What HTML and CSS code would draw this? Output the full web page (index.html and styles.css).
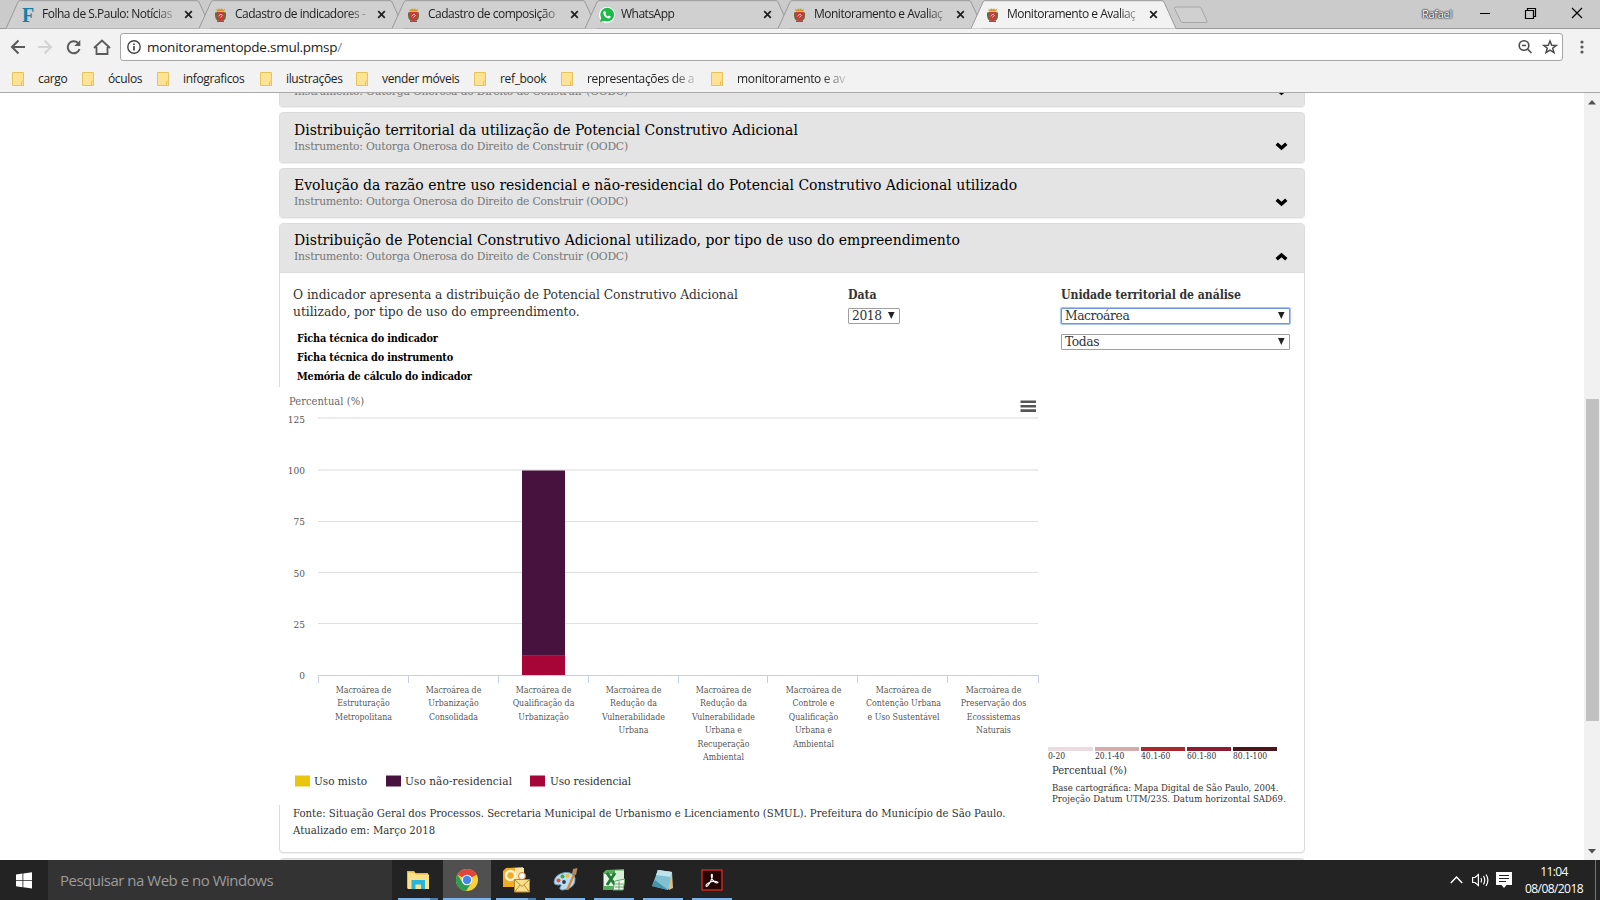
FILE: index.html
```
<!DOCTYPE html>
<html lang="pt-BR">
<head>
<meta charset="utf-8">
<title>Monitoramento e Avaliação</title>
<link rel="stylesheet" href="styles.css">
</head>
<body>
<svg width="0" height="0" class="defs">
  <defs>
    <g id="tab-shape"><path d="M0 28.5 L12 2 Q12.600 .7 14 .7 H191 Q192.500 .7 193 2 L205 28.500" stroke="#999"/></g>
    <g id="crest">
      <path d="M1.500 .5 L3 2 L4 .3 L5.500 1.500 L7 .3 L8 2 L9.700 .5 L9.500 3.500 H1.800z" fill="#cf9a2b"/>
      <path d="M0 5 Q-.3 11.500 2.500 12.500 L8.500 12.500 Q11.500 11.500 11 5 Q10 3.500 9 4.500 H2 Q1 3.500 0 5z" fill="#6b6a3c"/>
      <path d="M2 4 H9 V9 Q8.500 11 5.500 12 Q2.500 11 2 9z" fill="#cb3b3a"/>
      <path d="M3.700 8.300 L5.800 6 L7.300 7.500 L5.500 9.500" stroke="#f3c9c2" fill="none"/>
      <path d="M2 12.500 Q5.500 11.500 9 12.500 V14 H2z" fill="#b8433a"/>
    </g>
    <path id="cross" d="M1.200 1.200 L7.800 7.800 M7.800 1.200 L1.200 7.800" stroke="#222" stroke-width="1.8" fill="none"/>
    <g id="folder"><path d="M.5 .5 H11.500 V13.500 H.5z" fill="#ffe394" stroke="#e8c35c"/><path d="M9.500 13.500 V10 Q9.500 9.300 10.500 9.300 H11.500 V13.500z" fill="#ffe394" stroke="#e8c35c"/></g>
    <path id="chevron" d="M1.700 2.800 L6.500 7 L11.300 2.800" fill="none" stroke="#000" stroke-width="3.500"/>
    <path id="caret" d="M0 0 H6.600 L3.300 7z" fill="#222"/>
  </defs>
</svg>

<header class="browser">
  <div class="tabs">
    <div class="tab"><svg class="tab-bg" width="205" height="29" fill="#d0d0d0"><use href="#tab-shape"/></svg>
      <b class="fav fav-f">F</b><span class="tab-title">Folha de S.Paulo: Notícias</span><svg class="close" width="9" height="9"><use href="#cross"/></svg></div>
    <div class="tab"><svg class="tab-bg" width="205" height="29" fill="#d0d0d0"><use href="#tab-shape"/></svg>
      <svg class="fav" width="12" height="14"><use href="#crest"/></svg><span class="tab-title">Cadastro de indicadores -</span><svg class="close" width="9" height="9"><use href="#cross"/></svg></div>
    <div class="tab"><svg class="tab-bg" width="205" height="29" fill="#d0d0d0"><use href="#tab-shape"/></svg>
      <svg class="fav" width="12" height="14"><use href="#crest"/></svg><span class="tab-title">Cadastro de composição</span><svg class="close" width="9" height="9"><use href="#cross"/></svg></div>
    <div class="tab"><svg class="tab-bg" width="205" height="29" fill="#d0d0d0"><use href="#tab-shape"/></svg>
      <svg class="fav wa" width="16" height="16"><circle cx="8" cy="8" r="8" fill="#fff"/><circle cx="8.200" cy="7.700" r="6.900" fill="#1fb84b"/><path d="M1 15 L2.300 10.500 L5.500 13.700z" fill="#1fb84b"/><path d="M5 4.300 L6.200 4.200 L7 6 L6.300 7 Q7.200 8.800 9 9.500 L9.900 8.600 L11.800 9.600 Q11.600 11.500 9.800 11.500 Q5 10.800 4.300 6 Q4.300 5 5 4.300z" fill="#fff"/></svg><span class="tab-title">WhatsApp</span><svg class="close" width="9" height="9"><use href="#cross"/></svg></div>
    <div class="tab"><svg class="tab-bg" width="205" height="29" fill="#d0d0d0"><use href="#tab-shape"/></svg>
      <svg class="fav" width="12" height="14"><use href="#crest"/></svg><span class="tab-title">Monitoramento e Avaliaç</span><svg class="close" width="9" height="9"><use href="#cross"/></svg></div>
    <div class="tab active"><svg class="tab-bg" width="205" height="29" fill="#f2f2f2"><use href="#tab-shape"/></svg>
      <svg class="fav" width="12" height="14"><use href="#crest"/></svg><span class="tab-title">Monitoramento e Avaliaç</span><svg class="close" width="9" height="9"><use href="#cross"/></svg></div>
    <svg class="new-tab" width="36" height="18"><path d="M3 1 H26 Q27.500 1 28 2 L34 15 Q34.500 16.500 33 16.500 H10 Q8.500 16.500 8 15.500 L1.500 2.500 Q1 1 3 1z" fill="#d0d0d0" stroke="#a6a6a6"/></svg>
    <div class="win">
      <span class="user">Rafael</span>
      <svg width="110" height="12" fill="none" stroke="#000"><path d="M1 6.500 H11"/><path d="M46.500 3.500 H54.500 V11.500 H46.500z M48.500 3.500 V1.500 H56.500 V9.500 H54.500" stroke-width="1.200"/><path d="M93 1 L103 11 M103 1 L93 11" stroke-width="1.200"/></svg>
    </div>
  </div>
  <div class="toolbar">
    <svg width="100" height="18" class="nav" fill="none" stroke="#5a5a5a" stroke-width="2">
      <path d="M15 9 H2.500 M8.500 2.500 L2 9 L8.500 15.500"/>
      <path d="M28 9 H40.500 M34.500 2.500 L41 9 L34.500 15.500" stroke="#d3d3d3"/>
      <path d="M68 5 A6 6 0 1 0 69.500 11"/><path d="M70.300 2 V8 H64.300z" fill="#5a5a5a" stroke="none"/>
      <path d="M84 10 L92 2.500 L100 10 M86.500 9 V16 H97.500 V9" stroke-width="1.800"/>
    </svg>
    <div class="omnibox">
      <svg width="14" height="14" fill="none" stroke="#444" stroke-width="1.400"><circle cx="7" cy="7" r="6.200"/><path d="M7 6 V10.500 M7 3.500 V5" stroke-width="1.700"/></svg>
      <span class="url">monitoramentopde.smul.pmsp<i>/</i></span>
      <svg class="omni-end" width="40" height="16" fill="none" stroke="#4a4a4a" stroke-width="1.600"><circle cx="6" cy="6.500" r="4.800"/><path d="M9.500 10 L13.500 14 M4 6.500 H8"/><path d="M32 2 L33.700 6.200 L38.200 6.400 L34.700 9.200 L36 13.600 L32 11.100 L28 13.600 L29.300 9.200 L25.800 6.400 L30.300 6.200z" stroke-width="1.500"/></svg>
    </div>
    <svg class="dots" width="4" height="14" fill="#5a5a5a"><circle cx="2" cy="2" r="1.600"/><circle cx="2" cy="7" r="1.600"/><circle cx="2" cy="12" r="1.600"/></svg>
  </div>
  <nav class="bookmarks">
    <svg width="12" height="14"><use href="#folder"/></svg><span style="width:30px">cargo</span>
    <svg width="12" height="14"><use href="#folder"/></svg><span style="width:35px">óculos</span>
    <svg width="12" height="14"><use href="#folder"/></svg><span style="width:63px">infograficos</span>
    <svg width="12" height="14"><use href="#folder"/></svg><span style="width:56px">ilustrações</span>
    <svg width="12" height="14"><use href="#folder"/></svg><span style="width:78px">vender móveis</span>
    <svg width="12" height="14"><use href="#folder"/></svg><span style="width:47px">ref_book</span>
    <svg width="12" height="14"><use href="#folder"/></svg><span class="fade" style="width:110px">representações de a</span>
    <svg width="12" height="14"><use href="#folder"/></svg><span class="fade" style="width:110px">monitoramento e av</span>
  </nav>
</header>

<div class="viewport">
  <main>
    <section class="card"><div class="head"><h2>&nbsp;</h2><p>Instrumento: Outorga Onerosa do Direito de Construir (OODC)</p><svg class="chev" width="13" height="10"><use href="#chevron"/></svg></div></section>
    <section class="card"><div class="head"><h2>Distribuição territorial da utilização de Potencial Construtivo Adicional</h2><p>Instrumento: Outorga Onerosa do Direito de Construir (OODC)</p><svg class="chev" width="13" height="10"><use href="#chevron"/></svg></div></section>
    <section class="card"><div class="head"><h2>Evolução da razão entre uso residencial e não-residencial do Potencial Construtivo Adicional utilizado</h2><p>Instrumento: Outorga Onerosa do Direito de Construir (OODC)</p><svg class="chev" width="13" height="10"><use href="#chevron"/></svg></div></section>
    <section class="card open">
      <div class="head"><h2>Distribuição de Potencial Construtivo Adicional utilizado, por tipo de uso do empreendimento</h2><p>Instrumento: Outorga Onerosa do Direito de Construir (OODC)</p><svg class="chev up" width="13" height="10"><use href="#chevron"/></svg></div>
      <div class="intro">
        <div class="about">
          <p>O indicador apresenta a distribuição de Potencial Construtivo Adicional<br>utilizado, por tipo de uso do empreendimento.</p>
          <ul><li>Ficha técnica do indicador</li><li>Ficha técnica do instrumento</li><li>Memória de cálculo do indicador</li></ul>
        </div>
        <div class="field date"><label>Data</label><div class="select">2018<svg width="7" height="8"><use href="#caret"/></svg></div></div>
        <div class="field unit"><label>Unidade territorial de análise</label>
          <div class="select focus">Macroárea<svg width="7" height="8"><use href="#caret"/></svg></div>
          <div class="select">Todas<svg width="7" height="8"><use href="#caret"/></svg></div></div>
      </div>
      <div class="results">
        <svg class="chart" width="766" height="418" viewBox="279 387 766 418">
          <text x="289" y="405" class="axis-title" textLength="75">Percentual (%)</text>
          <g fill="#555"><path d="M1020.500 400.500h15.500v2.600h-15.500zM1020.500 404.900h15.500v2.600h-15.500zM1020.500 409.300h15.500v2.600h-15.500z"/></g>
          <g stroke="#e0e0e0"><path d="M318 418H1038M318 470H1038" stroke-width="1.600" stroke="#e6e6e6"/><path d="M318 521.500H1038M318 572.500H1038M318 623.500H1038"/></g>
          <g class="y-labels"><text x="305" y="423">125</text><text x="305" y="474">100</text><text x="305" y="525">75</text><text x="305" y="577">50</text><text x="305" y="628">25</text><text x="305" y="679">0</text></g>
          <path d="M522 470.500H565V655.500H522z" fill="#48123f"/>
          <path d="M522 655.500H565V675H522z" fill="#a70437"/>
          <path d="M522 655.500H565" stroke="#8c2a55"/>
          <path d="M318 675.500H1038.500M318.500 675V683M408.500 675V683M498.500 675V683M588.500 675V683M678.500 675V683M767.500 675V683M857.500 675V683M947.500 675V683M1038.500 675V683" stroke="#c5d0e0" fill="none"/>
          <g class="x-labels">
            <text y="693"><tspan x="363.500">Macroárea de</tspan><tspan x="363.500" dy="13.400">Estruturação</tspan><tspan x="363.500" dy="13.400">Metropolitana</tspan></text>
            <text y="693"><tspan x="453.500">Macroárea de</tspan><tspan x="453.500" dy="13.400">Urbanização</tspan><tspan x="453.500" dy="13.400">Consolidada</tspan></text>
            <text y="693"><tspan x="543.500">Macroárea de</tspan><tspan x="543.500" dy="13.400">Qualificação da</tspan><tspan x="543.500" dy="13.400">Urbanização</tspan></text>
            <text y="693"><tspan x="633.500">Macroárea de</tspan><tspan x="633.500" dy="13.400">Redução da</tspan><tspan x="633.500" dy="13.400">Vulnerabilidade</tspan><tspan x="633.500" dy="13.400">Urbana</tspan></text>
            <text y="693"><tspan x="723.500">Macroárea de</tspan><tspan x="723.500" dy="13.400">Redução da</tspan><tspan x="723.500" dy="13.400">Vulnerabilidade</tspan><tspan x="723.500" dy="13.400">Urbana e</tspan><tspan x="723.500" dy="13.400">Recuperação</tspan><tspan x="723.500" dy="13.400">Ambiental</tspan></text>
            <text y="693"><tspan x="813.500">Macroárea de</tspan><tspan x="813.500" dy="13.400">Controle e</tspan><tspan x="813.500" dy="13.400">Qualificação</tspan><tspan x="813.500" dy="13.400">Urbana e</tspan><tspan x="813.500" dy="13.400">Ambiental</tspan></text>
            <text y="693"><tspan x="903.500">Macroárea de</tspan><tspan x="903.500" dy="13.400">Contenção Urbana</tspan><tspan x="903.500" dy="13.400">e Uso Sustentável</tspan></text>
            <text y="693"><tspan x="993.500">Macroárea de</tspan><tspan x="993.500" dy="13.400">Preservação dos</tspan><tspan x="993.500" dy="13.400">Ecossistemas</tspan><tspan x="993.500" dy="13.400">Naturais</tspan></text>
          </g>
          <path d="M295 775.500h15v11h-15z" fill="#e9c60d"/><path d="M386 775.500h15v11h-15z" fill="#48123f"/><path d="M530 775.500h15v11h-15z" fill="#a70437"/>
          <g class="legend"><text x="314" y="785" textLength="53">Uso misto</text><text x="405" y="785" textLength="107">Uso não-residencial</text><text x="550" y="785" textLength="81">Uso residencial</text></g>
        </svg>
        <aside class="map-legend">
          <div class="scale">
            <div><i class="c1"></i>0-20</div><div><i class="c2"></i>20.1-40</div><div><i class="c3"></i>40.1-60</div><div><i class="c4"></i>60.1-80</div><div><i class="c5"></i>80.1-100</div>
          </div>
          <p class="unit-name">Percentual (%)</p>
          <p class="base"><span>Base cartográfica: Mapa Digital de São Paulo, 2004.</span><br><span class="wide">Projeção Datum UTM/23S. Datum horizontal SAD69.</span></p>
        </aside>
      </div>
      <p class="source">Fonte: Situação Geral dos Processos. Secretaria Municipal de Urbanismo e Licenciamento (SMUL). Prefeitura do Município de São Paulo.<br>Atualizado em: Março 2018</p>
    </section>
    <section class="card"><div class="head"></div></section>
  </main>
  <div class="scrollbar">
    <svg width="8" height="5"><path d="M0 4.500 L4 0 L8 4.500z" fill="#505050"/></svg>
    <div class="thumb"></div>
    <svg width="8" height="5"><path d="M0 0 L4 4.500 L8 0z" fill="#505050"/></svg>
  </div>
</div>

<footer class="taskbar">
  <div class="start"><svg width="16" height="17" fill="#fff"><path d="M0 2.600 L6.500 1.600 V8 H0z M7.300 1.500 L16 .2 V8 H7.300z M0 8.800 H6.500 V15.200 L0 14.300z M7.300 8.800 H16 V16.600 L7.300 15.300z"/></svg></div>
  <div class="search">Pesquisar na Web e no Windows</div>
  <div class="apps">
    <div class="app multi"><svg width="22" height="20"><path d="M0 1 H7 L8.500 3 H21 V18.500 H0z" fill="#e8b93d"/><path d="M1 2.500 H7 L9 4.500 H22 V19 H1z" fill="#fde188"/><path d="M4.500 10 H18 V19 H14 V14.500 H8.500 V19 H4.500z" fill="#27b5e0"/></svg></div>
    <div class="app current"><svg width="22" height="22"><circle cx="11" cy="11" r="11" fill="#fbcf3b"/><path d="M11 11 L1.470 5.500 A11 11 0 0 1 20.530 5.500z" fill="#e0453a"/><path d="M11 11 L20.530 5.500 H11z" fill="#e0453a"/><path d="M1.470 5.500 A11 11 0 0 0 10 22 L15.500 13.500 L11 11 L6.500 13.500z" fill="#2b9e55"/><circle cx="11" cy="11" r="5.300" fill="#fff"/><circle cx="11" cy="11" r="4.200" fill="#4487f4"/></svg></div>
    <div class="app multi"><svg width="27" height="26"><path d="M3 1 L20 0 V20 H0 V4z" fill="#f0ac24"/><path d="M12 1 H21 V12 H12z" fill="#fbe6a5"/><circle cx="7.500" cy="8.500" r="4.500" fill="none" stroke="#fff3cf" stroke-width="2.600"/><circle cx="19" cy="9" r="3.500" fill="#fff" stroke="#dd7b32"/><path d="M11.500 12.500 H26.500 V25 H11.500z" fill="#fbe08c" stroke="#b98a2a"/><path d="M11.500 12.500 L19 19.500 L26.500 12.500 M11.500 25 L17 18 M26.500 25 L21 18" fill="none" stroke="#b98a2a"/></svg></div>
    <div class="app"><svg width="25" height="24"><path d="M1 14 Q2 6 12 4.500 Q20 4 22 10 Q23 20 10 22 Q5 22 8 18 Q9 16 5 17 Q1 17 1 14z" fill="#b9dcef" stroke="#6f9fbd"/><circle cx="5.500" cy="12.500" r="2" fill="#e25135"/><circle cx="9.500" cy="8.500" r="2" fill="#3daa45"/><circle cx="14.500" cy="7.800" r="1.900" fill="#f0bd2c"/><circle cx="11" cy="14" r="1.900" fill="#273c69"/><path d="M13 22 L20 6 L22 7 L15.500 22z" fill="#d98432"/><path d="M19 6 L20 1 L24.500 0 L23 7z" fill="#b28a63"/></svg></div>
    <div class="app"><svg width="22" height="22"><path d="M3 1 L21 0 V21 H0 V4z" fill="#58ab5b"/><path d="M12 1.500 H21 V20 H12z" fill="#d9efd5"/><path d="M1 5 H13 V17 H1z" fill="#e7f5e2"/><path d="M4 4 L12 16 M12 4 L4 16" stroke="#1e7b38" stroke-width="3"/><path d="M12 12 L22 10 L20 21 H10z" fill="#f5faf3" stroke="#5fa868"/><path d="M12 15 H20 M12 18 H20 M16 12 V21" stroke="#5fa868"/></svg></div>
    <div class="app"><svg width="24" height="22"><path d="M6 1 L21 3 L22 19 L18 21z" fill="#d8c08d"/><path d="M7 1 L21 3 L17 21 L1 17z" fill="#80c0d3"/><path d="M7 1 L21 3 L19.500 8 L5 6z" fill="#bfe3ec"/><path d="M4 11 L17 21 L1 17z" fill="#4593ac"/></svg></div>
    <div class="app"><svg width="22" height="22"><path d="M1 1 H21 V21 H1z" fill="#250404" stroke="#c32a1d" stroke-width="1.500"/><path d="M5 16.500 Q5.500 14.500 10 12.800 Q15 11.500 17 13.500 Q16 15 13 12.500 Q9.500 9 10.500 5.500 Q11.700 4.500 11.300 8 Q10 13.500 6.500 17 Q5 18 5 16.500z" fill="none" stroke="#fff" stroke-width="1.100"/></svg></div>
  </div>
  <div class="tray">
    <svg width="64" height="18" fill="none" stroke="#fff" stroke-width="1.200"><path d="M.8 12 L6.500 6 L12.200 12" stroke-width="1.500"/><path d="M22.600 6.500 H25 L28.400 3.500 V14.500 L25 11.500 H22.600z M31 7 Q32.300 9 31 11.500 M33.500 5 Q36 9 33.500 13.500 M36 3.500 Q39.800 9 36 15"/><path d="M46 1 H62 V14 H56.500 L54 17 L51.500 14 H46z" fill="#fff" stroke="none"/><path d="M49 4.500 H59 M49 7.500 H59 M49 10.500 H56" stroke="#232323"/></svg>
    <div class="clock"><span>11:04</span><span>08/08/2018</span></div>
    <div class="peek"></div>
  </div>
</footer>
</body>
</html>
```
FILE: styles.css
```
* { box-sizing: border-box; }
body { margin: 0; width: 1600px; height: 900px; overflow: hidden; display: flex; flex-direction: column; background: #fff; font-family: "Open Sans", "Noto Sans", sans-serif; color: #222; }
svg { display: block; flex: none; }
h2, p, ul { margin: 0; padding: 0; font-weight: normal; }
i { font-style: normal; }
.defs { position: absolute; }

/* Browser frame */
.browser { height: 93px; background: #f2f2f2; border-bottom: 1px solid #a9a9a9; }
.tabs { height: 29px; background: #cbcbcb; display: flex; padding-left: 6px; box-shadow: inset 0 -1px #999; }
.tab { position: relative; width: 205px; height: 29px; margin-right: -12px; flex: none; display: flex; align-items: center; padding: 0 0 0 17px; }
.tab.active { z-index: 1; }
.tab-bg { position: absolute; left: 0; top: 0; }
.fav, .tab-title, .close { position: relative; }
.fav { width: 12px; margin-right: 8px; margin-left: -1px; }
.fav.wa { width: 16px; margin-left: -3px; margin-right: 6px; }
.fav-f { font: bold 20px/24px "Liberation Serif", serif; color: #1681a5; }
.tab-title { width: 136px; font-size: 12px; line-height: 18px; margin-top: -1px; letter-spacing: -.5px; white-space: nowrap; -webkit-mask-image: linear-gradient(90deg, #000 112px, transparent 138px); mask-image: linear-gradient(90deg, #000 112px, transparent 138px); }
.close { margin-left: 6px; }
.new-tab { margin: 6px 0 0 9px; position: relative; }
.win { display: flex; margin-left: auto; align-items: flex-start; padding-top: 7px; }
.user { width: 31px; font-size: 11px; line-height: 14px; letter-spacing: -.28px; color: #fff; text-shadow: 0 0 2px #222, 0 0 2px #222, 0 0 1px #222; }
.win > svg { margin-left: 26px; margin-right: 11px; }
.toolbar { display: flex; height: 36px; align-items: center; padding: 0 16px 0 10px; }
.nav { width: 103px; margin-right: 7px; overflow: visible; }
.omnibox { width: 1444px; height: 28px; background: #fff; border: 1px solid #a6a6a6; border-radius: 3px; display: flex; align-items: center; padding: 0 4px 0 6px; }
.url { margin-left: 6px; font-size: 13.500px; letter-spacing: -.25px; line-height: 20px; margin-top: -1px; }
.url i { color: #888; }
.omni-end { margin-left: auto; }
.dots { margin-left: 17px; }
.bookmarks { display: flex; align-items: center; height: 27px; padding-left: 12px; }
.bookmarks span { margin: 0 14px 0 14px; font-size: 12px; letter-spacing: -.35px; white-space: nowrap; line-height: 18px; flex: none; }
.bookmarks .fade { -webkit-mask-image: linear-gradient(90deg, #000 85px, transparent 114px); mask-image: linear-gradient(90deg, #000 85px, transparent 114px); }

/* Page content */
.viewport { height: 767px; display: flex; overflow: hidden; justify-content: space-between; font-family: "DejaVu Serif", serif; }
main { width: 1026px; margin: -35.700px 0 0 279px; }
.card { height: 50.100px; margin-bottom: 5px; border: 1px solid #dcdcdc; border-radius: 4px; box-shadow: 0 1px 1px rgba(0,0,0,.06); background: #e4e4e4; }
.card.open { height: 630.900px; background: #fff; }
.head { position: relative; height: 48.100px; padding: 6.300px 14px 0; border-radius: 3px 3px 0 0; background: #e4e4e4; }
.open .head { height: 49px; border-bottom: 1px solid #dcdcdc; }
.head h2 { font-size: 14px; line-height: 20px; letter-spacing: -.02px; margin-bottom: 1px; color: #000; white-space: nowrap; }
.open .head h2 { letter-spacing: .01px; }
.head p { font-size: 10.800px; line-height: 12px; letter-spacing: -.21px; color: #777; }
.chev { position: absolute; right: 16px; top: 28px; }
.chev.up { transform: rotate(180deg); }
.intro { height: 114.400px; display: flex; padding: 14px 14px 0 13px; color: #333; font-size: 12.300px; }
.about { width: 555px; }
.about p { line-height: 17px; letter-spacing: -.04px; white-space: nowrap; }
.about ul { list-style: none; margin: 8px 0 0 4px; font: bold 10.800px/19px "DejaVu Serif Condensed", "DejaVu Serif", serif; letter-spacing: -.15px; color: #000; }
.field label { display: block; font: bold 12.200px/17px "DejaVu Serif Condensed", "DejaVu Serif", serif; letter-spacing: -.08px; margin-bottom: 4px; }
.date { width: 213px; }
.unit { width: 229px; }
.select { display: flex; align-items: center; justify-content: space-between; height: 16px; border: 1px solid #a0a0a0; border-radius: 1px; padding: 0 4px 0 3px; margin-bottom: 10px; letter-spacing: -.4px; line-height: 14px; background: #fff; }
.date .select { width: 52px; }
.select.focus { border-color: #6f97dc; box-shadow: 0 0 0 1px #a9c4ef; }
.results { position: relative; display: flex; height: 418px; margin-left: -1px; }
.chart { background: #fff; font-family: "DejaVu Serif Condensed", "DejaVu Serif", serif; }
.axis-title { font-size: 11px; fill: #666; }
.y-labels { font-size: 10px; fill: #555; text-anchor: end; }
.x-labels { font-size: 8.760px; fill: #555; text-anchor: middle; }
.legend { font-size: 11.700px; fill: #333; }
.map-legend { padding: 360px 0 0 3px; font-family: "DejaVu Serif Condensed", "DejaVu Serif", serif; color: #333; white-space: nowrap; }
.scale { display: flex; gap: 2px; font-size: 8.500px; line-height: 9px; }
.scale div { width: 44px; }
.scale div:first-child { width: 45px; }
.scale i { display: block; height: 4px; margin-bottom: 1px; }
.c1 { background: #ecdbe0; }
.c2 { background: #d5abab; }
.c3 { background: #a82a2e; }
.c4 { background: #8b1d33; }
.c5 { background: #4a161b; }
.unit-name { margin: 3px 0 0 4px; font-size: 11.100px; line-height: 14px; }
.base { margin: 4px 0 0 4px; font-size: 9.500px; line-height: 11px; }
.base .wide { letter-spacing: .1px; }
.source { padding: 0 0 0 13px; font: 11.300px/17px "DejaVu Serif Condensed", "DejaVu Serif", serif; color: #333; white-space: nowrap; }
.scrollbar { width: 16px; background: #f1f1f1; display: flex; flex-direction: column; align-items: center; padding: 7px 0 6px; }
.thumb { width: 13px; height: 322px; margin: 294px 0 auto; background: #c1c1c1; }

/* Taskbar */
.taskbar { height: 40px; background: #232323; display: flex; }
.start { width: 48px; display: flex; align-items: center; justify-content: center; }
.search { width: 344px; background: #333; color: #9c9c9c; font-size: 15px; line-height: 41px; letter-spacing: -.49px; padding-left: 12px; }
.apps { display: flex; padding-left: 2px; }
.app { width: 48px; margin-right: 1px; display: flex; align-items: center; justify-content: center; background: linear-gradient(#7ab4ea, #7ab4ea) 50% 100% / 40px 2px no-repeat; }
.app.current { background: linear-gradient(#7ab4ea, #7ab4ea) 50% 100% / 48px 2px no-repeat #505050; }
.app.multi { background: linear-gradient(90deg, #7ab4ea 32px, #4f7ba6 32px) 50% 100% / 40px 2px no-repeat; }
.tray { display: flex; margin-left: auto; align-items: center; color: #fff; font-size: 12px; }
.clock { display: flex; flex-direction: column; align-items: center; width: 60px; margin: -1px 11px 0 10px; line-height: 17px; letter-spacing: -.57px; }
.peek { width: 5px; height: 40px; border-left: 1px solid #777; }
```
